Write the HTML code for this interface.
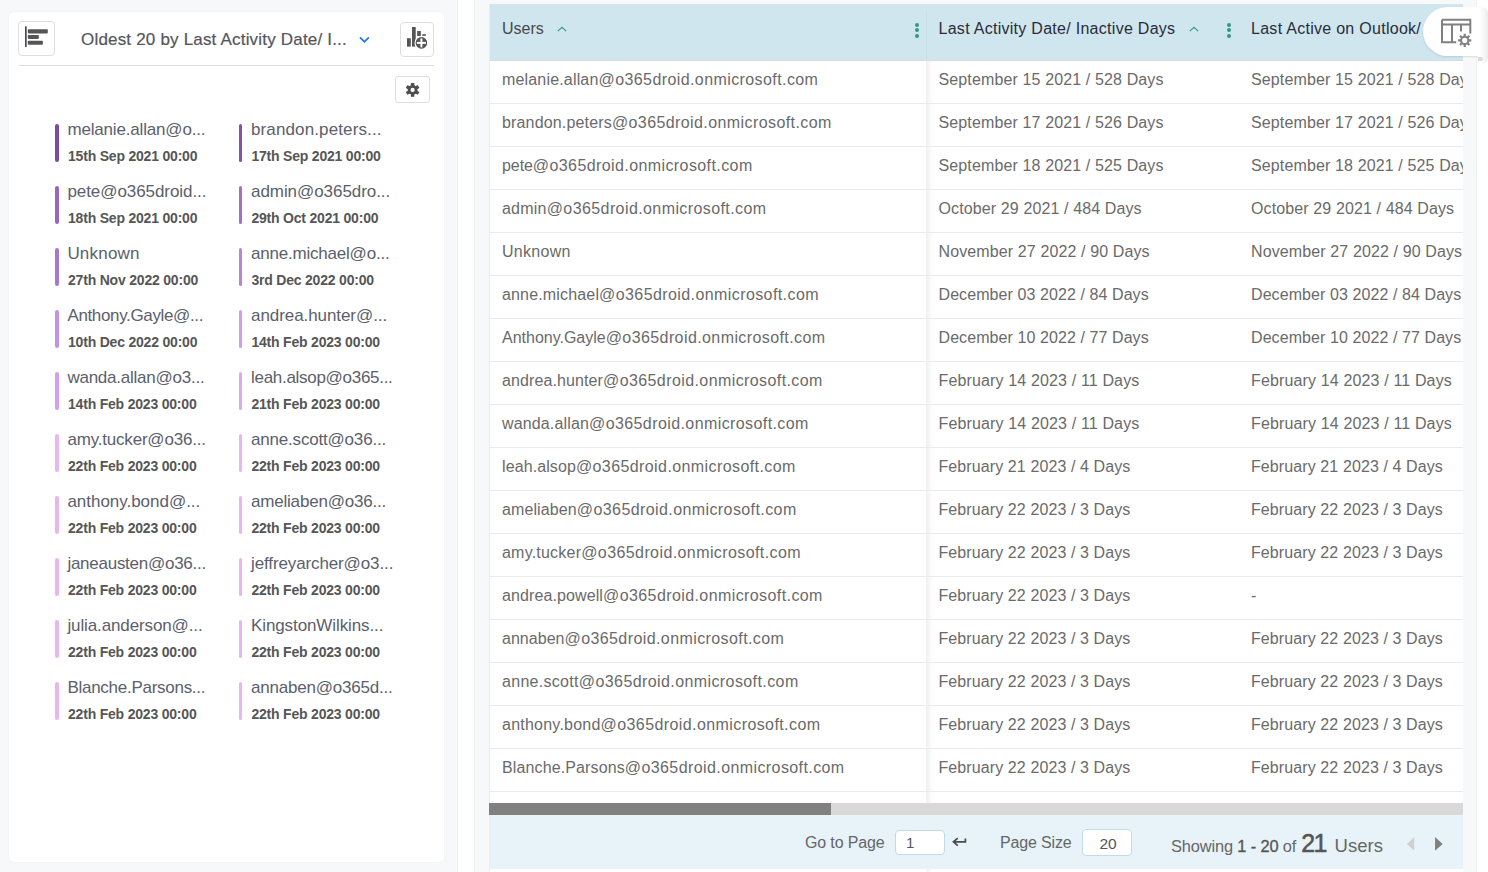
<!DOCTYPE html>
<html>
<head>
<meta charset="utf-8">
<title>Report</title>
<style>
*{box-sizing:border-box;margin:0;padding:0}
html,body{width:1488px;height:872px;overflow:hidden;background:#f7f8fa;font-family:"Liberation Sans",sans-serif}
body{position:relative}
i{display:block;font-style:normal}
#card{position:absolute;left:9px;top:12px;width:435px;height:850px;background:#fff;border-radius:5px;box-shadow:0 0 2px rgba(0,0,0,.05)}
.btn{position:absolute;background:#fff;border:1px solid #dedede;border-radius:4px}
.btn svg{position:absolute;left:-1px;top:-1px}
#title{position:absolute;left:72px;top:16px;font-size:17px;line-height:24px;color:#54565c;white-space:nowrap;letter-spacing:.19px;-webkit-text-stroke:.2px #54565c}
#divider{position:absolute;left:10px;top:53px;width:415px;height:1px;background:#dcdcdc}
.item{position:absolute;width:170px;height:38px}
.item .bar{position:absolute;left:0;top:0;width:4px;height:38px;border-radius:2px}
.item .nm{position:absolute;left:13px;top:-3.6px;font-size:17px;line-height:20px;color:#5b606b;white-space:nowrap}
.item .dt{position:absolute;left:13px;top:22px;font-size:14px;line-height:20px;color:#565656;font-weight:bold;white-space:nowrap;letter-spacing:-.2px}
#strip1{position:absolute;left:457px;top:0;width:18px;height:872px;background:#fff;border-left:1px solid #f0f1f3;border-right:1px solid #f0f1f3}
#strip2{position:absolute;left:1476px;top:0;width:12px;height:872px;background:#fff;border-left:1px solid #f0f1f3}
#tbl{position:absolute;left:489px;top:4px;width:974px;height:868px;background:#fff;border-left:1px solid #ebebeb}
#rows{position:absolute;left:0;top:0;width:973px;height:868px;overflow:hidden}
#thead{position:absolute;left:0;top:0;width:973px;height:57px;background:#d0e6ef;border-bottom:1px solid #d6dde1}
.th{position:absolute;top:14px;font-size:16px;line-height:22px;color:#3c3c3c;white-space:nowrap}
.row{position:absolute;left:0;width:973px;height:43px;border-bottom:1px solid #ebebeb}
.row>span{position:absolute;top:9px;font-size:16px;line-height:20px;color:#6a6a6a;white-space:nowrap}
.c1{left:12px;letter-spacing:0}.c2{left:448.5px;letter-spacing:.12px}.c3{left:761px;letter-spacing:.12px}
#colsep{position:absolute;left:436px;top:0;width:7px;height:868px;background:linear-gradient(to right,#f1f1f1 0,#f5f5f5 3px,#fcfcfc 5px,#fff 7px)}
#sbar{position:absolute;left:-1px;top:799px;width:974px;height:12px;background:#d9d9d9}
#sthumb{position:absolute;left:0;top:0;width:342px;height:12px;background:#808080}
#foot{position:absolute;left:-1px;top:811px;width:974px;height:54px;background:#e8f3f9}
#foot .t{position:absolute;font-size:16px;color:#666;white-space:nowrap;line-height:20px}
.inp{position:absolute;background:#fff;border:1px solid #c3dbe6;border-radius:4px;font-size:15px;color:#555;line-height:24px}
.dots{position:absolute;width:4px;height:16px}
.dots i{width:4px;height:4px;border-radius:2px;background:#2f9688;margin-bottom:1.8px}
#fab{position:absolute;left:1423px;top:7px;width:58px;height:49px;background:#fff;border-radius:24.5px 0 0 24.5px;box-shadow:0 1px 2px rgba(0,0,0,.12)}
#fabsh{position:absolute;left:1478px;top:7px;width:10px;height:57px;background:linear-gradient(to right,#fff 0,#fefefe 2px,#f6f6f6 6px,#ebebeb 10px);border-radius:0 6px 6px 0}
#fabbl{position:absolute;left:1478px;top:57px;width:5px;height:4px;background:#dadada;border-radius:0 2px 2px 0}

</style>
</head>
<body>
<div id="card">
  <div class="btn" style="left:9px;top:9px;width:37px;height:35px">
    <svg width="37" height="35" viewBox="0 0 37 35"><rect x="7" y="5.3" width="1.7" height="20.8" fill="#4a4a55"/><rect x="9.8" y="8.2" width="20" height="4.2" rx=".8" fill="#555"/><rect x="9.8" y="14" width="11" height="3.9" rx=".8" fill="#555"/><rect x="9.8" y="19.8" width="15.1" height="3.9" rx=".8" fill="#555"/></svg>
  </div>
  <div id="title">Oldest 20 by Last Activity Date/ I...</div>
  <svg style="position:absolute;left:349px;top:23px" width="14" height="10" viewBox="0 0 14 10"><path d="M1.9 2.4 L6.4 6.7 L10.9 2.4" fill="none" stroke="#1f7fd6" stroke-width="1.7"/></svg>
  <div class="btn" style="left:391px;top:10px;width:34px;height:35px">
    <svg width="34" height="35" viewBox="0 0 34 35"><g fill="#555"><rect x="7" y="16.2" width="3.8" height="8.4"/><rect x="12" y="5" width="3.7" height="19.6"/><rect x="17.2" y="9" width="3.6" height="5"/><rect x="22.2" y="12.2" width="3.7" height="1.6"/></g><circle cx="21.4" cy="20.9" r="6.9" fill="#fff"/><circle cx="21.4" cy="20.9" r="5.8" fill="#555"/><rect x="16.9" y="19.9" width="9" height="2" fill="#fff"/><rect x="20.4" y="16.4" width="2" height="9" fill="#fff"/></svg>
  </div>
  <div id="divider"></div>
  <div class="btn" style="left:386px;top:64px;width:35px;height:27px;border-radius:3px">
    <svg width="35" height="27" viewBox="0 0 35 27"><g transform="translate(17.6,13.9)" fill="#4f4f4f"><circle r="4.9"/><g id="t"><rect x="-1.7" y="-6.9" width="3.4" height="13.8"/></g><rect x="-1.7" y="-6.9" width="3.4" height="13.8" transform="rotate(60)"/><rect x="-1.7" y="-6.9" width="3.4" height="13.8" transform="rotate(120)"/><circle r="2.1" fill="#fff"/></g></svg>
  </div>
</div>
<div id="list">
<div class="item" style="left:55px;top:124px"><i class="bar" style="background:#7d4a9e;width:4px"></i><span class="nm" style="left:12.4px;letter-spacing:-0.17px">melanie.allan@o...</span><span class="dt" style="left:13px">15th Sep 2021 00:00</span></div>
<div class="item" style="left:239px;top:124px"><i class="bar" style="background:#8651a8;width:3px"></i><span class="nm" style="left:12px;letter-spacing:0.12px">brandon.peters...</span><span class="dt" style="left:12.4px">17th Sep 2021 00:00</span></div>
<div class="item" style="left:55px;top:186px"><i class="bar" style="background:#9a66b8;width:4px"></i><span class="nm" style="left:12.4px;letter-spacing:-0.07px">pete@o365droid...</span><span class="dt" style="left:13px">18th Sep 2021 00:00</span></div>
<div class="item" style="left:239px;top:186px"><i class="bar" style="background:#a470c6;width:3px"></i><span class="nm" style="left:12px;letter-spacing:-0.06px">admin@o365dro...</span><span class="dt" style="left:12.4px">29th Oct 2021 00:00</span></div>
<div class="item" style="left:55px;top:248px"><i class="bar" style="background:#a876cc;width:4px"></i><span class="nm" style="left:12.4px;letter-spacing:0.2px">Unknown</span><span class="dt" style="left:13px">27th Nov 2022 00:00</span></div>
<div class="item" style="left:239px;top:248px"><i class="bar" style="background:#b684da;width:3px"></i><span class="nm" style="left:12px;letter-spacing:-0.21px">anne.michael@o...</span><span class="dt" style="left:12.4px">3rd Dec 2022 00:00</span></div>
<div class="item" style="left:55px;top:310px"><i class="bar" style="background:#c590e4;width:4px"></i><span class="nm" style="left:12.4px;letter-spacing:-0.35px">Anthony.Gayle@...</span><span class="dt" style="left:13px">10th Dec 2022 00:00</span></div>
<div class="item" style="left:239px;top:310px"><i class="bar" style="background:#d09cee;width:3px"></i><span class="nm" style="left:12px;letter-spacing:-0.07px">andrea.hunter@...</span><span class="dt" style="left:12.4px">14th Feb 2023 00:00</span></div>
<div class="item" style="left:55px;top:372px"><i class="bar" style="background:#d29eee;width:4px"></i><span class="nm" style="left:12.4px;letter-spacing:-0.24px">wanda.allan@o3...</span><span class="dt" style="left:13px">14th Feb 2023 00:00</span></div>
<div class="item" style="left:239px;top:372px"><i class="bar" style="background:#dcaaf2;width:3px"></i><span class="nm" style="left:12px;letter-spacing:-0.29px">leah.alsop@o365...</span><span class="dt" style="left:12.4px">21th Feb 2023 00:00</span></div>
<div class="item" style="left:55px;top:434px"><i class="bar" style="background:#e9b6f3;width:4px"></i><span class="nm" style="left:12.4px;letter-spacing:-0.19px">amy.tucker@o36...</span><span class="dt" style="left:13px">22th Feb 2023 00:00</span></div>
<div class="item" style="left:239px;top:434px"><i class="bar" style="background:#e9b6f3;width:3px"></i><span class="nm" style="left:12px;letter-spacing:-0.19px">anne.scott@o36...</span><span class="dt" style="left:12.4px">22th Feb 2023 00:00</span></div>
<div class="item" style="left:55px;top:496px"><i class="bar" style="background:#eab4f2;width:4px"></i><span class="nm" style="left:12.4px;letter-spacing:-0.02px">anthony.bond@...</span><span class="dt" style="left:13px">22th Feb 2023 00:00</span></div>
<div class="item" style="left:239px;top:496px"><i class="bar" style="background:#eab4f2;width:3px"></i><span class="nm" style="left:12px;letter-spacing:-0.2px">ameliaben@o36...</span><span class="dt" style="left:12.4px">22th Feb 2023 00:00</span></div>
<div class="item" style="left:55px;top:558px"><i class="bar" style="background:#eab4f2;width:4px"></i><span class="nm" style="left:12.4px;letter-spacing:-0.26px">janeausten@o36...</span><span class="dt" style="left:13px">22th Feb 2023 00:00</span></div>
<div class="item" style="left:239px;top:558px"><i class="bar" style="background:#eab4f2;width:3px"></i><span class="nm" style="left:12px;letter-spacing:-0.12px">jeffreyarcher@o3...</span><span class="dt" style="left:12.4px">22th Feb 2023 00:00</span></div>
<div class="item" style="left:55px;top:620px"><i class="bar" style="background:#eab4f2;width:4px"></i><span class="nm" style="left:12.4px;letter-spacing:-0.12px">julia.anderson@...</span><span class="dt" style="left:13px">22th Feb 2023 00:00</span></div>
<div class="item" style="left:239px;top:620px"><i class="bar" style="background:#eab4f2;width:3px"></i><span class="nm" style="left:12px;letter-spacing:-0.1px">KingstonWilkins...</span><span class="dt" style="left:12.4px">22th Feb 2023 00:00</span></div>
<div class="item" style="left:55px;top:682px"><i class="bar" style="background:#eab4f2;width:4px"></i><span class="nm" style="left:12.4px;letter-spacing:-0.27px">Blanche.Parsons...</span><span class="dt" style="left:13px">22th Feb 2023 00:00</span></div>
<div class="item" style="left:239px;top:682px"><i class="bar" style="background:#eab4f2;width:3px"></i><span class="nm" style="left:12px;letter-spacing:-0.21px">annaben@o365d...</span><span class="dt" style="left:12.4px">22th Feb 2023 00:00</span></div>
</div>
<div id="strip1"></div>
<div id="strip2"></div>
<div id="tbl">
<div id="colsep"></div>
<div id="rows">
<div class="row" style="top:57px"><span class="c1"><span style="letter-spacing:0.171px">melanie.allan</span><span style="letter-spacing:0.407px">@o365droid.onmicrosoft.com</span></span><span class="c2" style="letter-spacing:0.13px">September 15 2021 / 528 Days</span><span class="c3" style="letter-spacing:0.13px">September 15 2021 / 528 Days</span></div>
<div class="row" style="top:100px"><span class="c1"><span style="letter-spacing:0.161px">brandon.peters</span><span style="letter-spacing:0.407px">@o365droid.onmicrosoft.com</span></span><span class="c2" style="letter-spacing:0.13px">September 17 2021 / 526 Days</span><span class="c3" style="letter-spacing:0.13px">September 17 2021 / 526 Days</span></div>
<div class="row" style="top:143px"><span class="c1"><span style="letter-spacing:-0.085px">pete</span><span style="letter-spacing:0.407px">@o365droid.onmicrosoft.com</span></span><span class="c2" style="letter-spacing:0.13px">September 18 2021 / 525 Days</span><span class="c3" style="letter-spacing:0.13px">September 18 2021 / 525 Days</span></div>
<div class="row" style="top:186px"><span class="c1"><span style="letter-spacing:0.224px">admin</span><span style="letter-spacing:0.407px">@o365droid.onmicrosoft.com</span></span><span class="c2" style="letter-spacing:0.119px">October 29 2021 / 484 Days</span><span class="c3" style="letter-spacing:0.119px">October 29 2021 / 484 Days</span></div>
<div class="row" style="top:229px"><span class="c1" style="letter-spacing:0.283px">Unknown</span><span class="c2" style="letter-spacing:0.119px">November 27 2022 / 90 Days</span><span class="c3" style="letter-spacing:0.119px">November 27 2022 / 90 Days</span></div>
<div class="row" style="top:272px"><span class="c1"><span style="letter-spacing:0.161px">anne.michael</span><span style="letter-spacing:0.407px">@o365droid.onmicrosoft.com</span></span><span class="c2" style="letter-spacing:0.083px">December 03 2022 / 84 Days</span><span class="c3" style="letter-spacing:0.083px">December 03 2022 / 84 Days</span></div>
<div class="row" style="top:315px"><span class="c1"><span style="letter-spacing:-0.005px">Anthony.Gayle</span><span style="letter-spacing:0.407px">@o365droid.onmicrosoft.com</span></span><span class="c2" style="letter-spacing:0.083px">December 10 2022 / 77 Days</span><span class="c3" style="letter-spacing:0.083px">December 10 2022 / 77 Days</span></div>
<div class="row" style="top:358px"><span class="c1"><span style="letter-spacing:0.105px">andrea.hunter</span><span style="letter-spacing:0.407px">@o365droid.onmicrosoft.com</span></span><span class="c2" style="letter-spacing:0.146px">February 14 2023 / 11 Days</span><span class="c3" style="letter-spacing:0.146px">February 14 2023 / 11 Days</span></div>
<div class="row" style="top:401px"><span class="c1"><span style="letter-spacing:0.145px">wanda.allan</span><span style="letter-spacing:0.407px">@o365droid.onmicrosoft.com</span></span><span class="c2" style="letter-spacing:0.146px">February 14 2023 / 11 Days</span><span class="c3" style="letter-spacing:0.146px">February 14 2023 / 11 Days</span></div>
<div class="row" style="top:444px"><span class="c1"><span style="letter-spacing:0.095px">leah.alsop</span><span style="letter-spacing:0.407px">@o365droid.onmicrosoft.com</span></span><span class="c2" style="letter-spacing:0.098px">February 21 2023 / 4 Days</span><span class="c3" style="letter-spacing:0.098px">February 21 2023 / 4 Days</span></div>
<div class="row" style="top:487px"><span class="c1"><span style="letter-spacing:0.108px">ameliaben</span><span style="letter-spacing:0.407px">@o365droid.onmicrosoft.com</span></span><span class="c2" style="letter-spacing:0.098px">February 22 2023 / 3 Days</span><span class="c3" style="letter-spacing:0.098px">February 22 2023 / 3 Days</span></div>
<div class="row" style="top:530px"><span class="c1"><span style="letter-spacing:0.214px">amy.tucker</span><span style="letter-spacing:0.407px">@o365droid.onmicrosoft.com</span></span><span class="c2" style="letter-spacing:0.098px">February 22 2023 / 3 Days</span><span class="c3" style="letter-spacing:0.098px">February 22 2023 / 3 Days</span></div>
<div class="row" style="top:573px"><span class="c1"><span style="letter-spacing:0.106px">andrea.powell</span><span style="letter-spacing:0.407px">@o365droid.onmicrosoft.com</span></span><span class="c2" style="letter-spacing:0.098px">February 22 2023 / 3 Days</span><span class="c3" style="letter-spacing:0.098px">-</span></div>
<div class="row" style="top:616px"><span class="c1"><span style="letter-spacing:0.029px">annaben</span><span style="letter-spacing:0.407px">@o365droid.onmicrosoft.com</span></span><span class="c2" style="letter-spacing:0.098px">February 22 2023 / 3 Days</span><span class="c3" style="letter-spacing:0.098px">February 22 2023 / 3 Days</span></div>
<div class="row" style="top:659px"><span class="c1"><span style="letter-spacing:0.297px">anne.scott</span><span style="letter-spacing:0.407px">@o365droid.onmicrosoft.com</span></span><span class="c2" style="letter-spacing:0.098px">February 22 2023 / 3 Days</span><span class="c3" style="letter-spacing:0.098px">February 22 2023 / 3 Days</span></div>
<div class="row" style="top:702px"><span class="c1"><span style="letter-spacing:0.234px">anthony.bond</span><span style="letter-spacing:0.407px">@o365droid.onmicrosoft.com</span></span><span class="c2" style="letter-spacing:0.098px">February 22 2023 / 3 Days</span><span class="c3" style="letter-spacing:0.098px">February 22 2023 / 3 Days</span></div>
<div class="row" style="top:745px"><span class="c1"><span style="letter-spacing:0.122px">Blanche.Parsons</span><span style="letter-spacing:0.407px">@o365droid.onmicrosoft.com</span></span><span class="c2" style="letter-spacing:0.098px">February 22 2023 / 3 Days</span><span class="c3" style="letter-spacing:0.098px">February 22 2023 / 3 Days</span></div>
<div class="row" style="top:788px"><span class="c2" style="letter-spacing:0px"></span><span class="c3" style="letter-spacing:0px"></span></div>
</div>
<div id="thead">
  <div class="th" style="left:12px;color:#484848">Users</div>
  <svg style="position:absolute;left:66px;top:21px" width="12" height="8" viewBox="0 0 12 8"><path d="M1.8 6.1 L6 2.3 L10.2 6.1" fill="none" stroke="#2f9a8c" stroke-width="1.25"/></svg>
  <div class="dots" style="left:424.8px;top:18.5px"><i></i><i></i><i></i></div>
  <i style="position:absolute;left:436px;top:6px;width:1px;height:50px;background:#c9dfe8"></i>
  <div class="th" style="left:448.5px;letter-spacing:.28px;color:#2b2b3a">Last Activity Date/ Inactive Days</div>
  <svg style="position:absolute;left:698px;top:21px" width="12" height="8" viewBox="0 0 12 8"><path d="M1.8 6.1 L6 2.3 L10.2 6.1" fill="none" stroke="#2f9a8c" stroke-width="1.25"/></svg>
  <div class="dots" style="left:737.1px;top:18.5px"><i></i><i></i><i></i></div>
  <div class="th" style="left:761px;letter-spacing:.28px;color:#2b2b3a">Last Active on Outlook/</div>
</div>
<div id="sbar"><div id="sthumb"></div></div>
<div id="foot">
  <div class="t" style="left:316px;top:18px;letter-spacing:-.15px">Go to Page</div>
  <div class="inp" style="left:406px;top:15px;width:50px;height:25px"><span style="position:absolute;left:10px;top:0px">1</span></div>
  <svg style="position:absolute;left:461px;top:19px" width="20" height="16" viewBox="0 0 20 16"><path d="M3.4 7.8 H15.4 V4.6 M7.8 4.1 L3.4 7.8 L7.8 11.6" fill="none" stroke="#4a4a4a" stroke-width="1.7"/></svg>
  <div class="t" style="left:511px;top:18px;letter-spacing:-.15px">Page Size</div>
  <div class="inp" style="left:593px;top:14px;width:50px;height:27px"><span style="position:absolute;left:16.5px;top:2px;font-size:15.5px">20</span></div>
  <div class="t" style="left:682px;top:8px;line-height:40px"><span style="font-size:16.4px;letter-spacing:-.14px">Showing <span style="color:#555;-webkit-text-stroke:.3px #555">1 - 20</span> of</span><span style="font-size:25px;margin-left:5px;color:#555;-webkit-text-stroke:.5px #555;letter-spacing:-1.6px">21</span><span style="font-size:18.5px;margin-left:8.8px">Users</span></div>
  <svg style="position:absolute;left:915px;top:18px" width="50" height="22" viewBox="0 0 50 22"><polygon points="2.95,10.9 10.2,3.95 10.2,17.8" fill="#d0d0d0"/><polygon points="31.05,3.95 38.7,10.9 31.05,17.8" fill="#808080"/></svg>
</div>
</div>
<div id="fab">
  <svg style="position:absolute;left:0;top:0" width="65" height="49" viewBox="0 0 65 49"><g fill="none" stroke="#808080" stroke-width="2"><path d="M19 12.8 H47.3 V26.5 M19 12.8 V35.2 H33.2 M19 17.5 H47.3 M29 17.5 V35.2 M38 17.5 V24.5"/></g><g transform="translate(41.7,33.4)"><g stroke="#808080" stroke-width="2.2"><path d="M0 -6.6V6.6M-6.6 0H6.6M-4.67 -4.67L4.67 4.67M-4.67 4.67L4.67 -4.67"/></g><circle r="4.6" fill="#808080"/><circle r="2.6" fill="#fff"/></g></svg>
</div>
<div id="fabsh"></div><div id="fabbl"></div>
</body>
</html>
